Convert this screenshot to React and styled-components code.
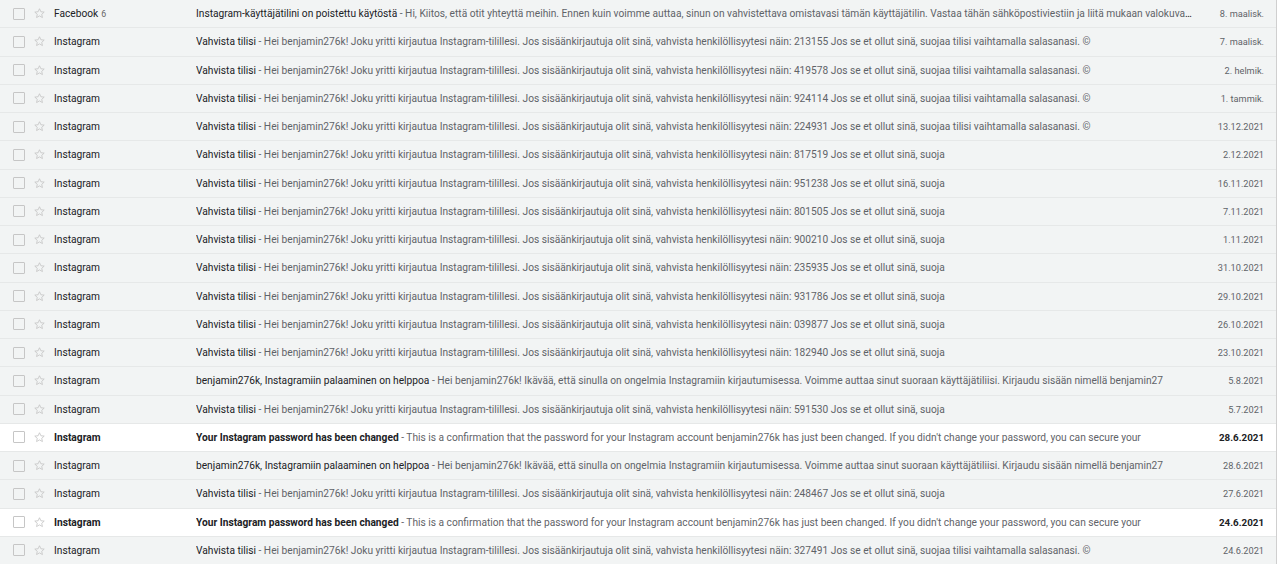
import styled, { createGlobalStyle } from 'styled-components'

const GlobalStyle = createGlobalStyle`
  html, body {
    margin: 0;
    padding: 0;
    background: #ffffff;
    overflow: hidden;
  }
  body {
    font-family: Roboto, "Liberation Sans", Arial, sans-serif;
  }
`

const Page = styled.div`
  display: flex;
  height: 564px;
  overflow: hidden;
`

const List = styled.div`
  width: 1277px;
  border-right: 1px solid #cfcfcf;
  box-sizing: border-box;
`

const Row = styled.div`
  display: grid;
  grid-template-columns: 20px 21px 142px minmax(0, 1fr) 68px;
  align-items: center;
  height: 28.25px;
  box-sizing: border-box;
  padding: 0 12px 0 13px;
  border-bottom: 1px solid #e6e8e8;
  background: ${p => (p.$unread ? '#ffffff' : '#f2f4f4')};
  font-size: 10.2px;
  color: #222;
  font-weight: ${p => (p.$unread ? 700 : 400)};
`

const Check = styled.span`
  width: 10px;
  height: 10px;
  border: 1px solid #c6c6c6;
  border-radius: 1px;
`

const StarIcon = () => (
  <svg width="13" height="13" viewBox="0 0 24 24">
    <path
      d="M12 3.2l2.6 5.6 6.1.6-4.6 4.1 1.3 6-5.4-3.1-5.4 3.1 1.3-6-4.6-4.1 6.1-.6z"
      fill="none"
      stroke="#c4c4c4"
      strokeWidth="1.5"
      strokeLinejoin="round"
    />
  </svg>
)

const Sender = styled.span`
  white-space: nowrap;
  color: #202124;
`

const Count = styled.span`
  font-size: 8.8px;
  font-weight: 400;
  color: #666;
  margin-left: 3px;
`

const Content = styled.span`
  white-space: nowrap;
  overflow: hidden;
  text-overflow: ellipsis;
  max-width: 996.6px;
`

const Subject = styled.span`
  color: #202124;
`

const Snippet = styled.span`
  color: #5f6368;
  font-weight: 400;
`

const DateCell = styled.span`
  text-align: right;
  white-space: nowrap;
  font-size: ${p => (p.$unread ? '9.8px' : '9.2px')};
  color: ${p => (p.$unread ? '#202124' : '#5f6368')};
`

const verify = code =>
  `Hei benjamin276k! Joku yritti kirjautua Instagram-tilillesi. Jos sisäänkirjautuja olit sinä, vahvista henkilöllisyytesi näin: ${code} Jos se et ollut sinä, suoja`
const verifyLong = code => `${verify(code)}a tilisi vaihtamalla salasanasi. ©`
const comeback =
  'Hei benjamin276k! Ikävää, että sinulla on ongelmia Instagramiin kirjautumisessa. Voimme auttaa sinut suoraan käyttäjätiliisi. Kirjaudu sisään nimellä benjamin27'
const changed =
  "This is a confirmation that the password for your Instagram account benjamin276k has just been changed. If you didn't change your password, you can secure your"

const V = 'Vahvista tilisi'
const C = 'benjamin276k, Instagramiin palaaminen on helppoa'
const P = 'Your Instagram password has been changed'

const mails = [
  {
    sender: 'Facebook',
    count: 6,
    subject: 'Instagram-käyttäjätilini on poistettu käytöstä',
    snippet:
      'Hi, Kiitos, että otit yhteyttä meihin. Ennen kuin voimme auttaa, sinun on vahvistettava omistavasi tämän käyttäjätilin. Vastaa tähän sähköpostiviestiin ja liitä mukaan valokuva, jossa pidät kädessäsi',
    date: '8. maalisk.',
  },
  { subject: V, snippet: verifyLong('213155'), date: '7. maalisk.' },
  { subject: V, snippet: verifyLong('419578'), date: '2. helmik.' },
  { subject: V, snippet: verifyLong('924114'), date: '1. tammik.' },
  { subject: V, snippet: verifyLong('224931'), date: '13.12.2021' },
  { subject: V, snippet: verify('817519'), date: '2.12.2021' },
  { subject: V, snippet: verify('951238'), date: '16.11.2021' },
  { subject: V, snippet: verify('801505'), date: '7.11.2021' },
  { subject: V, snippet: verify('900210'), date: '1.11.2021' },
  { subject: V, snippet: verify('235935'), date: '31.10.2021' },
  { subject: V, snippet: verify('931786'), date: '29.10.2021' },
  { subject: V, snippet: verify('039877'), date: '26.10.2021' },
  { subject: V, snippet: verify('182940'), date: '23.10.2021' },
  { subject: C, snippet: comeback, date: '5.8.2021' },
  { subject: V, snippet: verify('591530'), date: '5.7.2021' },
  { subject: P, snippet: changed, date: '28.6.2021', unread: true },
  { subject: C, snippet: comeback, date: '28.6.2021' },
  { subject: V, snippet: verify('248467'), date: '27.6.2021' },
  { subject: P, snippet: changed, date: '24.6.2021', unread: true },
  { subject: V, snippet: verifyLong('327491'), date: '24.6.2021' },
]

const App = () => (
  <Page>
    <GlobalStyle />
    <List>
      {mails.map((m, i) => (
        <Row key={i} $unread={m.unread}>
          <Check />
          <StarIcon />
          <Sender>
            {m.sender || 'Instagram'}
            {m.count && <Count>{m.count}</Count>}
          </Sender>
          <Content>
            <Subject>{m.subject}</Subject>
            <Snippet> - {m.snippet}</Snippet>
          </Content>
          <DateCell $unread={m.unread}>{m.date}</DateCell>
        </Row>
      ))}
    </List>
  </Page>
)

export default App
